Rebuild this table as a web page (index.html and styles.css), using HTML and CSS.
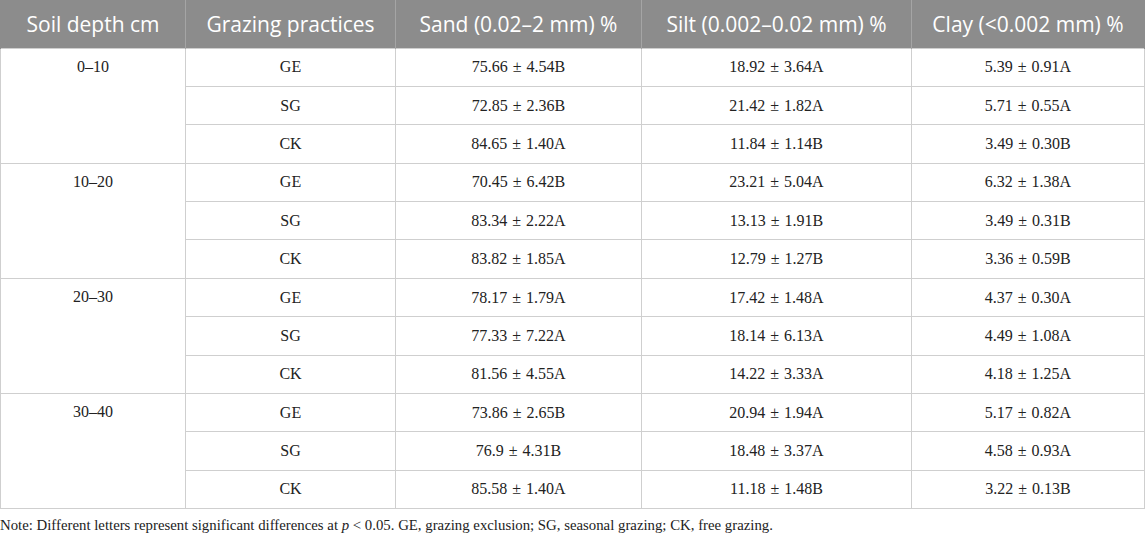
FILE: index.html
```html
<!DOCTYPE html>
<html>
<head>
<meta charset="utf-8">
<link rel="stylesheet" href="styles.css">
</head>
<body>
<table class="data">
  <colgroup>
    <col class="c1"><col class="c2"><col class="c3"><col class="c4"><col class="c5">
  </colgroup>
  <thead>
    <tr>
      <th>Soil depth cm</th>
      <th>Grazing practices</th>
      <th>Sand (0.02–2 mm) %</th>
      <th>Silt (0.002–0.02 mm) %</th>
      <th>Clay (&lt;0.002 mm) %</th>
    </tr>
  </thead>
  <tbody>
    <tr><td class="depth" rowspan="3">0–10</td><td>GE</td><td>75.66 ± 4.54B</td><td>18.92 ± 3.64A</td><td>5.39 ± 0.91A</td></tr>
    <tr><td>SG</td><td>72.85 ± 2.36B</td><td>21.42 ± 1.82A</td><td>5.71 ± 0.55A</td></tr>
    <tr><td>CK</td><td>84.65 ± 1.40A</td><td>11.84 ± 1.14B</td><td>3.49 ± 0.30B</td></tr>
    <tr><td class="depth" rowspan="3">10–20</td><td>GE</td><td>70.45 ± 6.42B</td><td>23.21 ± 5.04A</td><td>6.32 ± 1.38A</td></tr>
    <tr><td>SG</td><td>83.34 ± 2.22A</td><td>13.13 ± 1.91B</td><td>3.49 ± 0.31B</td></tr>
    <tr><td>CK</td><td>83.82 ± 1.85A</td><td>12.79 ± 1.27B</td><td>3.36 ± 0.59B</td></tr>
    <tr><td class="depth" rowspan="3">20–30</td><td>GE</td><td>78.17 ± 1.79A</td><td>17.42 ± 1.48A</td><td>4.37 ± 0.30A</td></tr>
    <tr><td>SG</td><td>77.33 ± 7.22A</td><td>18.14 ± 6.13A</td><td>4.49 ± 1.08A</td></tr>
    <tr><td>CK</td><td>81.56 ± 4.55A</td><td>14.22 ± 3.33A</td><td>4.18 ± 1.25A</td></tr>
    <tr><td class="depth" rowspan="3">30–40</td><td>GE</td><td>73.86 ± 2.65B</td><td>20.94 ± 1.94A</td><td>5.17 ± 0.82A</td></tr>
    <tr><td>SG</td><td>76.9 ± 4.31B</td><td>18.48 ± 3.37A</td><td>4.58 ± 0.93A</td></tr>
    <tr><td>CK</td><td>85.58 ± 1.40A</td><td>11.18 ± 1.48B</td><td>3.22 ± 0.13B</td></tr>
  </tbody>
</table>
<p class="note">Note: Different letters represent significant differences at <i>p</i> &lt; 0.05. GE, grazing exclusion; SG, seasonal grazing; CK, free grazing.</p>
</body>
</html>
```

FILE: styles.css
```css
html, body {
  margin: 0;
  padding: 0;
  background: #ffffff;
}

.data {
  border-collapse: collapse;
  table-layout: fixed;
  width: 1144px;
  font-family: "Liberation Serif", "Times New Roman", serif;
  font-size: 16px;
  color: #222222;
}

.c1 { width: 185px; }
.c2 { width: 210px; }
.c3 { width: 246px; }
.c4 { width: 270px; }
.c5 { width: 233px; }

.data th {
  background: #8c8c8c;
  color: #ffffff;
  font-family: "Open Sans", "Noto Sans", sans-serif;
  font-weight: 400;
  font-size: 21px;
  height: 48px;
  padding: 0 4px;
  text-align: center;
  vertical-align: middle;
  border-left: 1px solid #a5a5a5;
  border-right: 1px solid #a5a5a5;
  box-sizing: border-box;
  white-space: nowrap;
}

.data th:first-child { border-left: 1px solid #8c8c8c; }
.data th:last-child { border-right: 1px solid #8c8c8c; }

.data td {
  height: 38.4px;
  padding: 0 6px;
  text-align: center;
  vertical-align: middle;
  border: 1px solid #cfcfcf;
  box-sizing: border-box;
  word-spacing: 1px;
}

.data td.depth {
  vertical-align: top;
  padding-top: 9px;
}

.note {
  margin: 8px 0 0 0;
  font-family: "Liberation Serif", "Times New Roman", serif;
  font-size: 14.8px;
  color: #222222;
}
```
